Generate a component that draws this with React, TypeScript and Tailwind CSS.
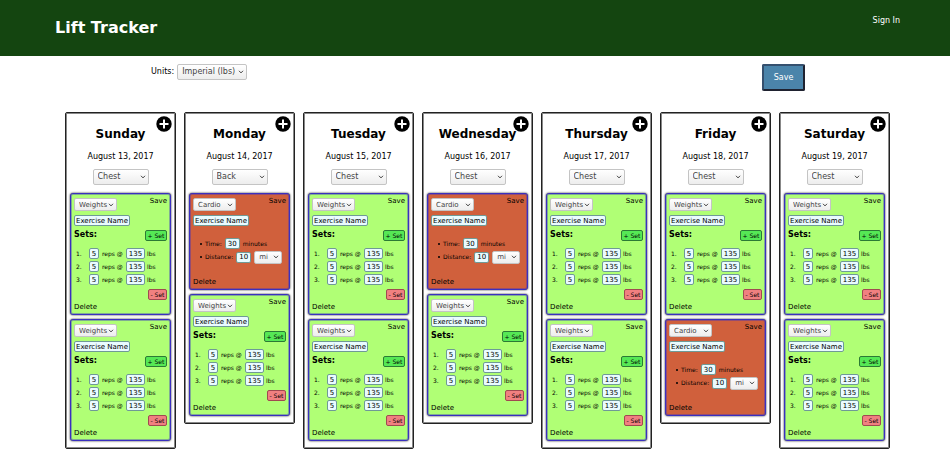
import React from "react";

type Kind = "Weights" | "Cardio";

interface Day {
  name: string;
  date: number;
  focus: "Chest" | "Back";
  cards: Kind[];
}

const week: Day[] = [
  { name: "Sunday", date: 13, focus: "Chest", cards: ["Weights", "Weights"] },
  { name: "Monday", date: 14, focus: "Back", cards: ["Cardio", "Weights"] },
  { name: "Tuesday", date: 15, focus: "Chest", cards: ["Weights", "Weights"] },
  { name: "Wednesday", date: 16, focus: "Chest", cards: ["Cardio", "Weights"] },
  { name: "Thursday", date: 17, focus: "Chest", cards: ["Weights", "Weights"] },
  { name: "Friday", date: 18, focus: "Chest", cards: ["Weights", "Cardio"] },
  { name: "Saturday", date: 19, focus: "Chest", cards: ["Weights", "Weights"] },
];

interface PickerProps {
  id?: string;
  label: string;
  options: string[];
  value: string;
  className: string;
}

function Picker({ id, label, options, value, className }: PickerProps) {
  return (
    <span className={`relative inline-flex shrink-0 ${className}`}>
      <select
        id={id}
        aria-label={label}
        defaultValue={value}
        className="size-full appearance-none rounded-[2px] border border-[#c4c4c4] bg-linear-to-b from-white to-[#ededed] pl-1 text-[#444]"
      >
        {options.map((option) => (
          <option key={option}>{option}</option>
        ))}
      </select>
      <svg
        viewBox="0 0 6 4"
        className="pointer-events-none absolute top-1/2 right-[3px] h-1 w-1.5 -translate-y-1/2"
        fill="none"
        stroke="#444"
        strokeWidth="1"
        aria-hidden="true"
      >
        <path d="M1 0.8 3 2.9 5 0.8" />
      </svg>
    </span>
  );
}

function Field({ label, value, className }: { label: string; value: string; className: string }) {
  return (
    <input
      type="text"
      aria-label={label}
      defaultValue={value}
      className={`h-[11px] shrink-0 rounded-[2px] border border-[#6f9a96] bg-[#e9fbff] text-center text-[7px] text-black ${className}`}
    />
  );
}

function WeightsBody() {
  return (
    <>
      <div className="mt-1 flex items-start justify-between">
        <h3 className="text-[8px] leading-[10px] font-bold">Sets:</h3>
        <button type="button" className="h-[11px] w-[22px] rounded-[2px] border border-[#2c7a35] bg-[#55e855] leading-[9px]">
          + Set
        </button>
      </div>
      <ol className="mt-[7px] flex flex-col gap-0.5 pl-0.5">
        {[1, 2, 3].map((n) => (
          <li key={n} className="flex h-[11px] items-center">
            <span className="w-[13px]">{n}.</span>
            <Field label={`Reps in set ${n}`} value="5" className="w-[10px]" />
            <span className="w-[27px] pl-[3px] whitespace-nowrap">reps @</span>
            <Field label={`Weight in set ${n}`} value="135" className="w-[19px]" />
            <span className="pl-0.5">lbs</span>
          </li>
        ))}
      </ol>
      <div className="mt-1 flex justify-end">
        <button type="button" className="h-[11px] w-[19px] rounded-[2px] border border-[#a04a50] bg-[#f08080] leading-[9px]">
          - Set
        </button>
      </div>
      <button type="button" className="mt-[3px] block text-[7px] leading-[8px]">Delete</button>
    </>
  );
}

function CardioBody() {
  return (
    <>
      <ul className="mt-3 flex flex-col gap-px pl-[7px]">
        <li className="flex h-[11px] items-center gap-[3px]">
          <span className="size-0.5 rounded-full bg-black" />
          <span>Time:</span>
          <Field label="Time in minutes" value="30" className="w-[15px]" />
          <span>minutes</span>
        </li>
        <li className="flex h-[14px] items-center gap-[3px]">
          <span className="size-0.5 rounded-full bg-black" />
          <span>Distance:</span>
          <Field label="Distance" value="10" className="w-[15px]" />
          <Picker label="Distance unit" options={["mi", "km"]} value="mi" className="h-[13px] w-[28px] text-[7px]" />
        </li>
      </ul>
      <button type="button" className="mt-[14px] block text-[7px] leading-[8px]">Delete</button>
    </>
  );
}

function ExerciseCard({ kind }: { kind: Kind }) {
  const weights = kind === "Weights";
  return (
    <section
      className={`rounded-[3px] border border-[#3a30c0] px-[3px] pt-1 pb-[3px] text-[6px] leading-[8px] shadow-[0_0_2px_#111,inset_0_0_0_1px_#3a30c066] ${
        weights ? "bg-[#b0ff75]" : "bg-[#d0603c]"
      }`}
    >
      <div className="flex items-start justify-between">
        <Picker label="Exercise type" options={["Weights", "Cardio"]} value={kind} className="h-[13px] w-[43px] text-[7px]" />
        <button type="button" className="text-[7px] leading-[7px]">Save</button>
      </div>
      <div className="mt-1 flex">
        <Field label="Exercise name" value="Exercise Name" className="w-[56px]" />
      </div>
      {weights ? <WeightsBody /> : <CardioBody />}
    </section>
  );
}

function DayColumn({ day }: { day: Day }) {
  return (
    <article className="relative min-w-0 flex-1 rounded-[2px] border border-[#222] px-1 pt-[13px] pb-[7px] shadow-[inset_0_0_0_1px_#888]">
      <button
        type="button"
        aria-label={`Add exercise to ${day.name}`}
        className="absolute top-[3px] right-[3px] size-4"
      >
        <svg viewBox="0 0 16 16" className="size-4" aria-hidden="true">
          <circle cx="8" cy="8" r="7.7" fill="#000" />
          <path d="M8 3.5v9M3.5 8h9" stroke="#fff" strokeWidth="2" />
        </svg>
      </button>
      <h2 className="text-center text-[12px] leading-4 font-bold">{day.name}</h2>
      <p className="mt-[9px] text-center leading-3">August {day.date}, 2017</p>
      <div className="mt-[6px] flex justify-center">
        <Picker label={`${day.name} muscle group`} options={["Chest", "Back", "Legs"]} value={day.focus} className="h-4 w-14" />
      </div>
      <div className="mt-2 flex flex-col gap-1">
        {day.cards.map((kind, i) => (
          <ExerciseCard key={i} kind={kind} />
        ))}
      </div>
    </article>
  );
}

export default function App() {
  return (
    <div className="bg-white font-['DejaVu_Sans',sans-serif] text-[8px] leading-3 text-black">
      <header className="flex items-start justify-between bg-[#144510] pt-4 pr-[50px] pb-4 pl-[55px] text-white">
        <h1 className="text-[16px] leading-6 font-bold">Lift Tracker</h1>
        <a href="#sign-in" className="leading-[10px]">Sign In</a>
      </header>
      <main>
        <div className="flex items-start justify-between pt-2 pr-[145px] pl-[151px]">
          <div className="flex items-center gap-[3px]">
            <label htmlFor="units">Units:</label>
            <Picker id="units" label="Units" options={["Imperial (lbs)", "Metric (kg)"]} value="Imperial (lbs)" className="h-4 w-[70px]" />
          </div>
          <button
            type="button"
            className="h-[27px] w-[43px] rounded-[2px] border-2 border-t-[#35506e] border-r-[#1f2230] border-b-[#1f2230] border-l-[#35506e] bg-[#4b84aa] text-white"
          >
            Save
          </button>
        </div>
        <div className="mt-[21px] flex items-start gap-2 pr-[60px] pl-[65px]">
          {week.map((day) => (
            <DayColumn key={day.name} day={day} />
          ))}
        </div>
      </main>
    </div>
  );
}
